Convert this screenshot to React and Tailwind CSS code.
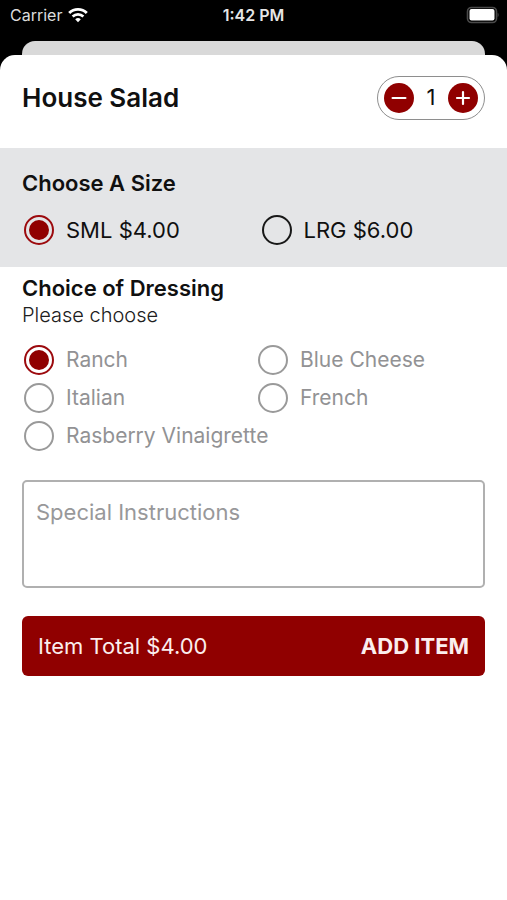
import { useState } from "react";

const radioBase =
  "size-[30px] shrink-0 appearance-none rounded-full border-2 bg-clip-content p-[3px] checked:border-[#9c0a0e] checked:bg-[#900000]";

function StatusBar() {
  return (
    <header className="grid h-[30px] grid-cols-3 items-center bg-black px-2 text-white">
      <div className="flex items-center gap-1.5 pl-0.5">
        <span className="text-base text-[#dcdcdc]">Carrier</span>
        <svg width="20" height="16" viewBox="0 0 20 16" fill="none" stroke="#fff" aria-hidden="true">
          <path d="M1.2 6a12.6 12.6 0 0 1 17.6 0" strokeWidth="2.9" />
          <path d="M4.6 9.5a7.8 7.8 0 0 1 10.8 0" strokeWidth="2.6" />
          <path d="M10 15.2 7.2 12.3a4 4 0 0 1 5.6 0z" fill="#fff" stroke="none" />
        </svg>
      </div>
      <span className="text-center text-base font-semibold text-[#e6e6e6]">1:42 PM</span>
      <svg className="justify-self-end" width="33" height="18" viewBox="0 0 33 18" aria-hidden="true">
        <rect x="1.5" y="1.5" width="29" height="15" rx="4" fill="none" stroke="#4a4a4a" strokeWidth="1.6" />
        <rect x="3.5" y="3" width="25" height="11.5" rx="2" fill="#fff" />
        <path d="M31.6 6.8c1.4.6 1.4 3.8 0 4.4z" fill="#4a4a4a" />
      </svg>
    </header>
  );
}

function Stepper({ value, onChange }) {
  const button = "grid size-[30px] place-items-center rounded-full bg-[#900000]";
  return (
    <div className="flex h-11 w-[108px] items-center justify-between rounded-full border border-[#8e8e8e] px-1.5">
      <button type="button" aria-label="Decrease quantity" className={button} onClick={() => onChange(Math.max(1, value - 1))}>
        <svg width="16" height="16" viewBox="0 0 16 16" stroke="#fff" strokeWidth="2.2" strokeLinecap="round">
          <path d="M1.6 8h12.8" />
        </svg>
      </button>
      <span className="text-[22px]">{value}</span>
      <button type="button" aria-label="Increase quantity" className={button} onClick={() => onChange(value + 1)}>
        <svg width="16" height="16" viewBox="0 0 16 16" stroke="#fff" strokeWidth="2.2" strokeLinecap="round">
          <path d="M2 8h12M8 2v12" />
        </svg>
      </button>
    </div>
  );
}

const sizes = [
  { name: "SML", price: 4 },
  { name: "LRG", price: 6 },
];
const dressings = ["Ranch", "Blue Cheese", "Italian", "French", "Rasberry Vinaigrette"];

export default function App() {
  const [quantity, setQuantity] = useState(1);
  const [size, setSize] = useState(0);
  const [dressing, setDressing] = useState("Ranch");
  const total = (sizes[size].price * quantity).toFixed(2);

  return (
    <div className="flex min-h-screen flex-col bg-black font-['Inter','Liberation_Sans',sans-serif] text-[#101010]">
      <StatusBar />
      <div className="mx-[22px] mt-[11px] h-7 rounded-t-[13px] bg-[#d9d9d9]" />
      <main className="-mt-3.5 flex-1 rounded-t-[15px] bg-white">
        <div className="flex h-[93px] items-center justify-between px-[22px] pb-2">
          <h1 className="text-[26px] leading-8 font-semibold">House Salad</h1>
          <Stepper value={quantity} onChange={setQuantity} />
        </div>

        <fieldset className="h-[119px] bg-[#e4e5e7] pt-5">
          <legend className="float-left w-full px-[22px] text-[22px] leading-[30px] font-semibold">Choose A Size</legend>
          <div className="clear-both grid grid-cols-2 pt-[17px] pr-2 pl-6">
            {sizes.map((option, index) => (
              <label key={option.name} className="flex items-center gap-3 text-[22px] leading-[30px]">
                <input
                  type="radio"
                  name="size"
                  className={`${radioBase} border-[#181818]`}
                  checked={size === index}
                  onChange={() => setSize(index)}
                />
                {option.name} ${option.price.toFixed(2)}
              </label>
            ))}
          </div>
        </fieldset>

        <fieldset className="pt-1.5">
          <legend className="float-left w-full px-[22px] text-[22px] leading-[30px] font-semibold">Choice of Dressing</legend>
          <p className="clear-both px-[22px] text-xl leading-6 font-light text-[#202020]">Please choose</p>
          <div className="grid grid-cols-2 gap-y-2 pt-[18px] pr-[15px] pl-6">
            {dressings.map((name) => (
              <label key={name} className="flex items-center gap-3 text-[21px] leading-[30px] whitespace-nowrap text-[#929294]">
                <input
                  type="radio"
                  name="dressing"
                  className={`${radioBase} border-[#9a9a9a]`}
                  checked={dressing === name}
                  onChange={() => setDressing(name)}
                />
                {name}
              </label>
            ))}
          </div>
        </fieldset>

        <div className="px-[22px] pt-[29px]">
          <textarea
            aria-label="Special Instructions"
            placeholder="Special Instructions"
            className="block h-[108px] w-full resize-none rounded-[5px] border-2 border-[#b0b0b0] px-3 py-4 text-[22px] leading-7 placeholder:text-[#98989a]"
          />
          <button type="button" className="mt-7 flex h-[60px] w-full items-center justify-between rounded-md bg-[#900000] px-4 text-[22px] text-[#fbeeee]">
            <span>Item Total ${total}</span>
            <span className="font-bold">ADD ITEM</span>
          </button>
        </div>
      </main>
    </div>
  );
}
